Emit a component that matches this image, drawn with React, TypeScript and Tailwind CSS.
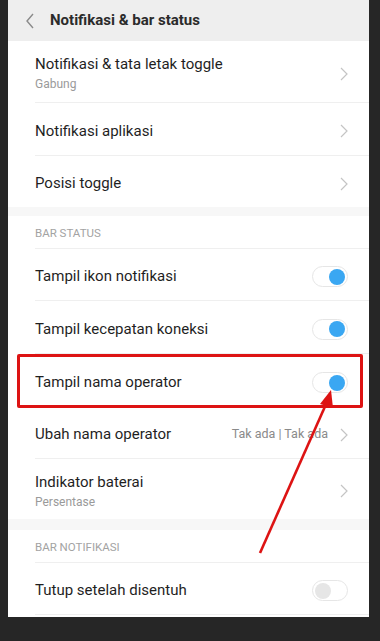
import React from "react"

function Chevron() {
  return (
    <svg width="8" height="14" viewBox="0 0 8 14" className="shrink-0">
      <path d="M1 1 L7 7 L1 13" fill="none" stroke="#c4c4c4" strokeWidth="1.2" />
    </svg>
  )
}

function Toggle({ on }: { on: boolean }) {
  return (
    <div className="w-[36px] h-[21px] rounded-full border border-[#e6e6e6] bg-white flex items-center px-[2px] shrink-0">
      {on ? (
        <div className="ml-auto w-[16px] h-[16px] rounded-full bg-[#3aa7f2]" />
      ) : (
        <div className="w-[16px] h-[16px] rounded-full bg-[#e6e6e6]" />
      )}
    </div>
  )
}

function Row({
  title,
  sub,
  right,
  divider = true,
  h = "h-[52px]",
}: {
  title: string
  sub?: string
  right?: React.ReactNode
  divider?: boolean
  h?: string
}) {
  return (
    <div className="pl-[27px]">
      <div className={`${h} flex items-center pt-[4px] pr-[21px] ${divider ? "border-b border-[#efefef]" : ""}`}>
        <div className="flex-1 min-w-0">
          <div className="text-[15px] leading-[19px] text-[#1f1f1f]">{title}</div>
          {sub && <div className="text-[12px] leading-[16px] text-[#9a9a9a] mt-[2px]">{sub}</div>}
        </div>
        {right}
      </div>
    </div>
  )
}

function SectionHeader({ label }: { label: string }) {
  return (
    <div className="pl-[27px]">
      <div className="h-[33px] flex items-center border-b border-[#efefef] text-[11.5px] text-[#a3a3a3] pt-[3px]">
        {label}
      </div>
    </div>
  )
}

export default function App() {
  return (
    <div
      className="w-[380px] h-[641px] bg-[#262626] overflow-hidden relative"
      style={{ fontFamily: "Roboto, 'Noto Sans', sans-serif" }}
    >
      <div className="ml-[8px] w-[361px] h-[617px] bg-white overflow-hidden">
        {/* header */}
        <div className="h-[41px] bg-[#eeeeee] flex items-center pl-[17px]">
          <svg width="10" height="16" viewBox="0 0 10 16">
            <path d="M8 1 L2 8 L8 15" fill="none" stroke="#8a8a8a" strokeWidth="1.4" />
          </svg>
          <div className="ml-[15px] text-[15px] font-bold text-[#2b2b2b]">Notifikasi &amp; bar status</div>
        </div>

        <Row title="Notifikasi & tata letak toggle" sub="Gabung" right={<Chevron />} h="h-[62px]" />
        <Row title="Notifikasi aplikasi" right={<Chevron />} h="h-[53px]" />
        <Row title="Posisi toggle" right={<Chevron />} divider={false} h="h-[51px]" />
        <div className="h-[9px] bg-[#f7f7f7]" />

        <SectionHeader label="BAR STATUS" />
        <Row title="Tampil ikon notifikasi" right={<Toggle on />} />
        <Row title="Tampil kecepatan koneksi" right={<Toggle on />} h="h-[53px]" />
        <Row title="Tampil nama operator" right={<Toggle on />} divider={false} h="h-[53px]" />
        <Row
          title="Ubah nama operator"
          right={
            <div className="flex items-center gap-[12px]">
              <span className="text-[12.5px] text-[#8a8a8a]">Tak ada | Tak ada</span>
              <Chevron />
            </div>
          }
        />
        <Row title="Indikator baterai" sub="Persentase" right={<Chevron />} divider={false} h="h-[60px]" />
        <div className="h-[11px] bg-[#f7f7f7]" />

        <SectionHeader label="BAR NOTIFIKASI" />
        <Row title="Tutup setelah disentuh" right={<Toggle on={false} />} />
      </div>

      {/* annotation: red box */}
      <div className="absolute left-[17px] top-[354px] w-[346px] h-[54px] border-[3px] border-[#dd1313] rounded-[2px]" />

      {/* annotation: arrow */}
      <svg className="absolute left-0 top-0" width="380" height="641" viewBox="0 0 380 641">
        <line x1="260" y1="553" x2="327" y2="402" stroke="#dd1313" strokeWidth="2.6" />
        <polygon points="331,390 320,404 333,408" fill="#dd1313" />
      </svg>
    </div>
  )
}
